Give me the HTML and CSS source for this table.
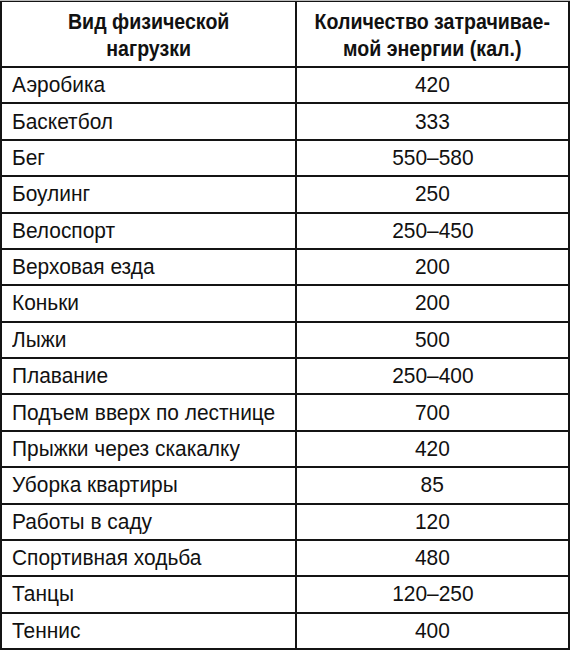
FILE: index.html
```html
<!DOCTYPE html>
<html lang="ru">
<head>
<meta charset="utf-8">
<link rel="stylesheet" href="styles.css">
</head>
<body>
<div class="table">
  <div class="cell head"><span class="t">Вид физической<br>нагрузки</span></div>
  <div class="cell head"><span class="t">Количество затрачивае-<br>мой энергии (кал.)</span></div>
  <div class="cell name"><span class="t">Аэробика</span></div><div class="cell val"><span class="t">420</span></div>
  <div class="cell name"><span class="t">Баскетбол</span></div><div class="cell val"><span class="t">333</span></div>
  <div class="cell name"><span class="t">Бег</span></div><div class="cell val"><span class="t">550–580</span></div>
  <div class="cell name"><span class="t">Боулинг</span></div><div class="cell val"><span class="t">250</span></div>
  <div class="cell name"><span class="t">Велоспорт</span></div><div class="cell val"><span class="t">250–450</span></div>
  <div class="cell name"><span class="t">Верховая езда</span></div><div class="cell val"><span class="t">200</span></div>
  <div class="cell name"><span class="t">Коньки</span></div><div class="cell val"><span class="t">200</span></div>
  <div class="cell name"><span class="t">Лыжи</span></div><div class="cell val"><span class="t">500</span></div>
  <div class="cell name"><span class="t">Плавание</span></div><div class="cell val"><span class="t">250–400</span></div>
  <div class="cell name"><span class="t">Подъем вверх по лестнице</span></div><div class="cell val"><span class="t">700</span></div>
  <div class="cell name"><span class="t">Прыжки через скакалку</span></div><div class="cell val"><span class="t">420</span></div>
  <div class="cell name"><span class="t">Уборка квартиры</span></div><div class="cell val"><span class="t">85</span></div>
  <div class="cell name"><span class="t">Работы в саду</span></div><div class="cell val"><span class="t">120</span></div>
  <div class="cell name"><span class="t">Спортивная ходьба</span></div><div class="cell val"><span class="t">480</span></div>
  <div class="cell name"><span class="t">Танцы</span></div><div class="cell val"><span class="t">120–250</span></div>
  <div class="cell name"><span class="t">Теннис</span></div><div class="cell val"><span class="t">400</span></div>
</div>
</body>
</html>
```
FILE: styles.css
```css
html, body {
  margin: 0;
  padding: 0;
  background: #fff;
}
.table {
  width: 570px;
  height: 650px;
  box-sizing: border-box;
  display: grid;
  grid-template-columns: 293px 271px;
  grid-template-rows: 64px repeat(16, 1fr);
  gap: 2px;
  padding: 1px 2px 2px 2px;
  background: #141414;
  border-top: 1px solid #bbb;
  font-family: "Liberation Sans", Arial, sans-serif;
  color: #111;
}
.cell {
  background: #fff;
  display: flex;
  align-items: center;
  font-size: 22px;
  overflow: hidden;
}
.t {
  display: inline-block;
  white-space: nowrap;
  transform: scaleX(0.95);
}
.head {
  justify-content: center;
  text-align: center;
  font-weight: bold;
  font-size: 22px;
  line-height: 27px;
}
.head .t {
  transform: scaleX(0.89);
  padding-top: 1px;
}
.name {
  padding-left: 10px;
}
.name .t {
  transform-origin: left center;
}
.val {
  justify-content: center;
}
```
